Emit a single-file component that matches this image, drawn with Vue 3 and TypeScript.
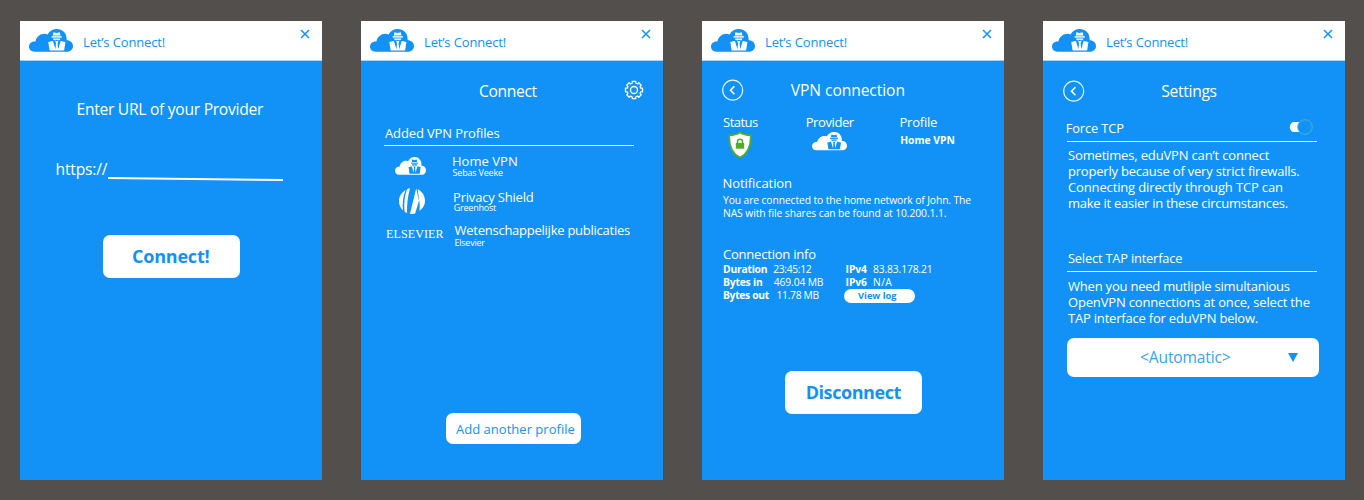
<script setup lang="ts">
import { defineComponent, h } from 'vue'

interface Line { text: string; track: number }
interface Stat { label: string; value: string; cls: string }

const CloudLogo = defineComponent({
  name: 'CloudLogo',
  setup() {
    return () => h('svg', { viewBox: '0 0 44 23', preserveAspectRatio: 'none' }, [
      h('path', { fill: 'var(--cloud)', d: 'M5.6 22.8C2.2 22.8 0 20.4 0 17.6 0 14.6 2.6 12 6.4 12.6 7.6 6.8 13 3.4 18.6 5.4 20.4 2 23.8 0 27.8 0c5.8 0 9.8 4.3 9.8 9.6v1.6c3.8 0 6.4 2.6 6.4 5.8 0 3.2-2.4 5.8-6 5.8z' }),
      h('g', { fill: 'var(--agent)' }, [
        h('path', { d: 'M24.4 3.2l3.2.7 3.2-.7.6 3.3h-7.600z' }),
        h('path', { d: 'M22.6 7.2h10.2v1.400H22.6z' }),
        h('path', { d: 'M24.2 9.400h7v1c-1 1.200-2.500 1-3.500.3-1 .7-2.500.9-3.500-.3z' }),
        h('path', { d: 'M19.3 12.900l4.200-.8h8.600l4.300.8-1.100 7.600q-.1 1-1 1H21.400q-.9 0-1-1z' }),
      ]),
      h('path', { fill: 'var(--cloud)', d: 'M23.900 11.800h2.200l.9 2.400-.6 6zM31.700 11.800h-2.200l-.9 2.400.6 6z' }),
    ])
  },
})

const BackIcon = defineComponent({
  name: 'BackIcon',
  setup() {
    return () => h('svg', { viewBox: '0 0 22 22', fill: 'none', stroke: '#fff' }, [
      h('circle', { cx: 10.7, cy: 11.2, r: 10, 'stroke-width': 1.2, 'stroke-opacity': 0.9 }),
      h('path', { d: 'M12.400 7.200L8.500 11.200l3.900 4', 'stroke-width': 1.6 }),
    ])
  },
})

// Outline of an eight-toothed cog centred on 10,10.
function cogPath(): string {
  const pts: string[] = []
  for (let i = 0; i < 8; i++) {
    const base = (i * Math.PI) / 4
    const steps: [number, number][] = [[-0.27, 7], [-0.2, 8.7], [0.2, 8.7], [0.27, 7]]
    for (const [da, r] of steps) {
      pts.push(`${(10 + r * Math.sin(base + da)).toFixed(2)} ${(10 - r * Math.cos(base + da)).toFixed(2)}`)
    }
  }
  return 'M' + pts.join('L') + 'Z'
}
const cog = cogPath()

const notification: Line[] = [
  { text: 'You are connected to the home network of John. The', track: -0.1 },
  { text: 'NAS with file shares can be found at 10.200.1.1.', track: -0.08 },
]
const tcpText: Line[] = [
  { text: 'Sometimes, eduVPN can’t connect', track: -0.16 },
  { text: 'properly because of very strict firewalls.', track: -0.21 },
  { text: 'Connecting directly through TCP can', track: -0.14 },
  { text: 'make it easier in these circumstances.', track: -0.26 },
]
const tapText: Line[] = [
  { text: 'When you need mutliple simultanious', track: -0.21 },
  { text: 'OpenVPN connections at once, select the', track: -0.17 },
  { text: 'TAP interface for eduVPN below.', track: -0.2 },
]
const traffic: Stat[] = [
  { label: 'Duration', value: '23:45:12', cls: 'duration' },
  { label: 'Bytes in', value: '469.04 MB', cls: 'bytes-in' },
  { label: 'Bytes out', value: '11.78 MB', cls: 'bytes-out' },
]
const addresses: Stat[] = [
  { label: 'IPv4', value: '83.83.178.21', cls: 'ipv4' },
  { label: 'IPv6', value: 'N/A', cls: 'ipv6' },
]
const panels = ['provider', 'profiles', 'status', 'settings'] as const
</script>

<template>
  <main class="stage">
    <section v-for="p in panels" :key="p" class="panel">
      <header class="bar">
        <CloudLogo class="bar-logo" />
        <span class="bar-title">Let’s Connect!</span>
        <svg class="close" viewBox="0 0 10 10"><path d="M1 1l8 8M9 1L1 9" /></svg>
      </header>

      <div v-if="p === 'provider'" class="content provider">
        <h1 class="title">Enter URL of your Provider</h1>
        <div class="url">
          <span class="scheme">https://</span>
          <svg class="rule" viewBox="0 0 175 6"><path d="M0 2L175 4" /></svg>
        </div>
        <button class="btn connect">Connect!</button>
      </div>

      <div v-else-if="p === 'profiles'" class="content profiles">
        <div class="head">
          <h1 class="title">Connect</h1>
          <svg class="gear" viewBox="0 0 20 20">
            <path :d="cog" />
            <circle cx="10" cy="10" r="3.5" />
          </svg>
        </div>
        <h2 class="list-head">Added VPN Profiles</h2>
        <div class="row home">
          <div class="mark"><CloudLogo class="row-logo" /></div>
          <div class="who"><div class="name">Home VPN</div><div class="org">Sebas Veeke</div></div>
        </div>
        <div class="row shield-row">
          <div class="mark">
            <svg class="greenhost" viewBox="0 0 26 26">
              <path d="M6.500 2C2.500 4.500 0 8.500 0 13c0 3.700 1.500 7 3.900 9.300C3.200 15.500 4 8.500 6.500 2z" />
              <path d="M8 1.200C5.400 8.500 4.700 16 5.600 23.700c.9.600 1.600 1 2.500 1.300C7.800 16.500 8.700 8.500 11 .2c-1.100.1-2.100.5-3 1z" />
              <path d="M17.200.6L11 25.700c.7.200 1.300.3 2 .3 1.100 0 2.200-.1 3.200-.4l3.800-13z" />
              <path d="M18.700 1.300l2 15.200-.2 6.300C23.900 20.500 26 17 26 13c0-5.400-3-9.700-7.300-11.700z" />
            </svg>
          </div>
          <div class="who"><div class="name">Privacy Shield</div><div class="org">Greenhost</div></div>
        </div>
        <div class="row elsevier">
          <div class="mark wordmark">ELSEVIER</div>
          <div class="who"><div class="name">Wetenschappelijke publicaties</div><div class="org">Elsevier</div></div>
        </div>
        <button class="btn add">Add another profile</button>
      </div>

      <div v-else-if="p === 'status'" class="content status">
        <div class="head">
          <BackIcon class="back" />
          <h1 class="title">VPN connection</h1>
        </div>
        <div class="facts">
          <div class="fact f-status">
            <div class="label">Status</div>
            <svg class="shield" viewBox="0 0 24 28">
              <path class="plate" d="M12 1.300C9 3.500 5.800 4.300 1.300 4.300c-.3 9.500 1.700 18 10.700 22.300 9-4.300 11-12.800 10.700-22.300C18.200 4.300 15 3.500 12 1.300z" />
              <path class="shackle" d="M9.500 12.500v-1.700a2.500 2.500 0 0 1 5 0v1.700" />
              <rect class="lock" x="7.800" y="11.900" width="8.400" height="5.800" />
            </svg>
          </div>
          <div class="fact f-provider">
            <div class="label">Provider</div>
            <CloudLogo class="fact-logo" />
          </div>
          <div class="fact f-profile">
            <div class="label">Profile</div>
            <div class="profile-name">Home VPN</div>
          </div>
        </div>
        <h2 class="sub notif">Notification</h2>
        <div class="small">
          <div v-for="l in notification" :key="l.text" :style="{ letterSpacing: l.track + 'px' }">{{ l.text }}</div>
        </div>
        <h2 class="sub info">Connection info</h2>
        <div class="stats">
          <div class="col">
            <div v-for="s in traffic" :key="s.label" class="stat" :class="s.cls"><b>{{ s.label }}</b><span>{{ s.value }}</span></div>
          </div>
          <div class="col right">
            <div v-for="s in addresses" :key="s.label" class="stat" :class="s.cls"><b>{{ s.label }}</b><span>{{ s.value }}</span></div>
            <button class="log">View log</button>
          </div>
        </div>
        <button class="btn disconnect">Disconnect</button>
      </div>

      <div v-else class="content settings">
        <div class="head">
          <BackIcon class="back" />
          <h1 class="title">Settings</h1>
        </div>
        <div class="setting force">
          <span>Force TCP</span>
          <svg class="toggle" viewBox="0 0 24 16">
            <path class="track" d="M5.500 3H12v10H5.500C2.500 13 .8 11 .8 8S2.500 3 5.500 3z" />
            <circle class="knob" cx="16" cy="8" r="7.300" />
          </svg>
        </div>
        <div class="text">
          <div v-for="l in tcpText" :key="l.text" :style="{ letterSpacing: l.track + 'px' }">{{ l.text }}</div>
        </div>
        <div class="setting tap"><span>Select TAP interface</span></div>
        <div class="text">
          <div v-for="l in tapText" :key="l.text" :style="{ letterSpacing: l.track + 'px' }">{{ l.text }}</div>
        </div>
        <div class="btn select">
          <span>&lt;Automatic&gt;</span>
          <svg class="caret" viewBox="0 0 10 9"><path d="M0 0h10L5 9z" /></svg>
        </div>
      </div>
    </section>
  </main>
</template>

<style>
body {
  margin: 0;
  background: #534f4d;
}
</style>

<style scoped>
.stage {
  display: flex;
  gap: 39px;
  box-sizing: border-box;
  width: 1364px;
  height: 500px;
  padding: 21px 19px 20px 20px;
  background: #534f4d;
  font-family: "Open Sans", "Noto Sans", sans-serif;
  color: #fff;
  overflow: hidden;
  white-space: nowrap;
}
.panel {
  display: flex;
  flex-direction: column;
  flex: 0 0 302px;
  height: 459px;
  background: #1292f6;
  --cloud: #fff;
  --agent: #1292f6;
}
.bar {
  display: flex;
  align-items: flex-start;
  box-sizing: border-box;
  height: 40px;
  background: #fff;
  border-bottom: 1px solid #a6d4fb;
  color: #1292f6;
  --cloud: #1292f6;
  --agent: #fff;
}
.bar-logo { width: 44px; height: 23px; margin: 8px 0 0 9px; }
.bar-title { margin: 12px 0 0 10px; font-size: 13px; font-weight: 500; line-height: 18px; letter-spacing: -0.14px; }
.close { width: 10px; height: 10px; margin: 8px 12px 0 auto; }
.close path { stroke: #1292f6; stroke-width: 1.5; fill: none; }

.content { display: flex; flex-direction: column; align-items: flex-start; flex: 1; }
h1, h2 { margin: 0; font-weight: 400; }
.title { font-size: 15.6px; line-height: 20px; }
.head { display: flex; align-items: flex-start; width: 100%; height: 22px; }
button { border: 0; padding: 0; font-family: inherit; white-space: nowrap; }
.btn {
  box-sizing: border-box;
  border-radius: 7px;
  background: #fff;
  color: #1292f6;
  text-align: left;
}

.provider .title { margin: 38px 0 0 56.5px; letter-spacing: -0.27px; }
.url { display: flex; align-items: flex-start; height: 20px; margin: 40px 0 0 35.5px; }
.scheme { width: 52.5px; font-size: 15.6px; line-height: 20px; letter-spacing: -0.17px; }
.rule { width: 175px; height: 6px; margin-top: 17px; }
.rule path { stroke: #fff; stroke-width: 2; }
.connect, .disconnect { width: 137px; height: 43px; font-size: 18px; font-weight: 700; line-height: 43px; }
.connect { margin: 56px 0 0 83px; padding-left: 29px; letter-spacing: -0.21px; }

.profiles .head { margin-top: 20px; }
.profiles .title { margin-left: 118px; letter-spacing: -0.33px; }
.gear { width: 20px; height: 20px; margin: -1px 19px 0 auto; }
.gear path, .gear circle { fill: none; stroke: #fff; stroke-width: 1.3; stroke-linejoin: round; }
.list-head {
  box-sizing: border-box;
  width: 250px;
  height: 22px;
  margin: 21px 0 0 23px;
  padding-left: 1px;
  border-bottom: 1px solid #fff;
  font-size: 13px;
  line-height: 18px;
  letter-spacing: -0.13px;
}
.row { display: flex; align-items: flex-start; height: 27px; margin-left: 23px; }
.home { margin-top: 7px; }
.shield-row { margin-top: 9px; }
.elsevier { margin-top: 6px; }
.mark { display: flex; width: 68px; }
.row-logo { width: 31px; height: 18px; margin: 4px 0 0 11px; }
.greenhost { width: 26px; height: 26px; margin: -1px 0 0 15px; fill: #fff; }
.wordmark {
  box-sizing: border-box;
  padding: 5px 0 0 2px;
  font-family: "Liberation Serif", serif;
  font-size: 12px;
  line-height: 14px;
  letter-spacing: 0.12px;
}
.name { font-size: 13px; line-height: 16px; }
.org { margin-top: -3px; font-size: 9px; line-height: 13px; letter-spacing: -0.18px; }
.home .org { padding-left: 0.5px; }
.home .name { letter-spacing: 0.04px; }
.shield-row .mark { width: 69px; }
.shield-row .name { letter-spacing: -0.19px; }
.shield-row .org { margin-top: -4px; padding-left: 0.7px; letter-spacing: -0.22px; }
.elsevier .mark { width: 70.5px; }
.elsevier .name { letter-spacing: -0.25px; }
.elsevier .org { margin-top: -2px; letter-spacing: -0.23px; }
.add { width: 135px; height: 31px; margin: 164px 0 0 85px; padding-left: 10px; font-size: 13px; line-height: 32px; letter-spacing: 0.02px; }

.status .head { margin-top: 19px; }
.back { width: 22px; height: 22px; margin: -1px 0 0 20px; }
.status .back, .settings .back { flex: none; }
.status .title { margin-left: 46.8px; letter-spacing: -0.07px; }
.facts { display: flex; height: 50px; margin: 11px 0 0 21px; }
.label { font-size: 13px; line-height: 18px; }
.f-status { width: 82.7px; }
.f-status .label { letter-spacing: -0.5px; }
.f-provider { width: 93.8px; }
.f-provider .label { letter-spacing: -0.4px; }
.f-profile .label { letter-spacing: -0.23px; }
.fact svg { display: block; }
.shield { width: 24px; height: 28px; margin: 0 0 0 4.5px; }
.plate { fill: #fff; stroke: #52ac2c; stroke-width: 1.7; }
.shackle { fill: none; stroke: #52ac2c; stroke-width: 1.5; }
.lock { fill: #52ac2c; }
.fact-logo { width: 35px; height: 18.5px; margin: 1px 0 0 6px; }
.profile-name { margin: 2px 0 0 0.7px; font-size: 10.3px; font-weight: 700; line-height: 14px; }
.sub { font-size: 13px; line-height: 18px; }
.notif { margin: 11px 0 0 20.6px; letter-spacing: -0.08px; }
.small { margin: 2px 0 0 21px; font-size: 10.3px; line-height: 13px; }
.info { margin: 25px 0 0 21px; letter-spacing: -0.21px; }
.stats { display: flex; margin: 0 0 0 21px; font-size: 10.3px; line-height: 13px; }
.col { width: 121px; }
.stat { display: flex; }
.stat b { font-weight: 700; }
.right .stat { margin-left: 1.6px; }
.duration b { width: 50.2px; letter-spacing: -0.22px; }
.duration span { letter-spacing: -0.32px; }
.bytes-in b { width: 50.8px; letter-spacing: -0.18px; }
.bytes-in span { letter-spacing: -0.13px; }
.bytes-out b { width: 53.5px; letter-spacing: -0.32px; }
.bytes-out span { letter-spacing: -0.31px; }
.ipv4 b, .ipv6 b { width: 27.5px; letter-spacing: -0.08px; }
.ipv4 span { letter-spacing: -0.15px; }
.ipv6 span { letter-spacing: 0.3px; }
.log {
  display: block;
  box-sizing: border-box;
  width: 71px;
  height: 14px;
  padding-left: 14px;
  border-radius: 7px;
  background: #fff;
  color: #1292f6;
  font-size: 9.3px;
  font-weight: 700;
  line-height: 14px;
  text-align: left;
}
.disconnect { margin: 68px 0 0 83px; padding-left: 20.7px; letter-spacing: -0.44px; }

.settings .head { margin-top: 20px; }
.settings .title { margin-left: 76.3px; letter-spacing: -0.3px; }
.setting {
  display: flex;
  justify-content: space-between;
  box-sizing: border-box;
  width: 250px;
  height: 22px;
  margin-left: 24px;
  border-bottom: 1px solid #fff;
  font-size: 12.8px;
  line-height: 18px;
}
.setting span { margin-top: -1px; }
.force { margin-top: 17px; letter-spacing: -0.1px; }
.force span { margin-left: -1.3px; }
.toggle { width: 24px; height: 16px; margin: -1px 4.5px 0 0; }
.track { fill: #fff; }
.knob { fill: #1292f6; stroke: #55b4bd; stroke-width: 0.9; }
.tap { margin-top: 39px; letter-spacing: -0.17px; }
.tap span { margin-left: 1px; }
.text { margin: 5px 0 0 25px; font-size: 13px; line-height: 16px; }
.tap + .text { margin-top: 6px; }
.select {
  display: flex;
  justify-content: space-between;
  width: 252px;
  height: 39px;
  margin: 12px 0 0 24px;
  padding: 9px 21px 0 73px;
  font-size: 15.6px;
  line-height: 20px;
  letter-spacing: -0.15px;
}
.select span { opacity: 0.85; }
.caret { width: 10px; height: 9px; margin-top: 6px; fill: #1292f6; }
</style>
